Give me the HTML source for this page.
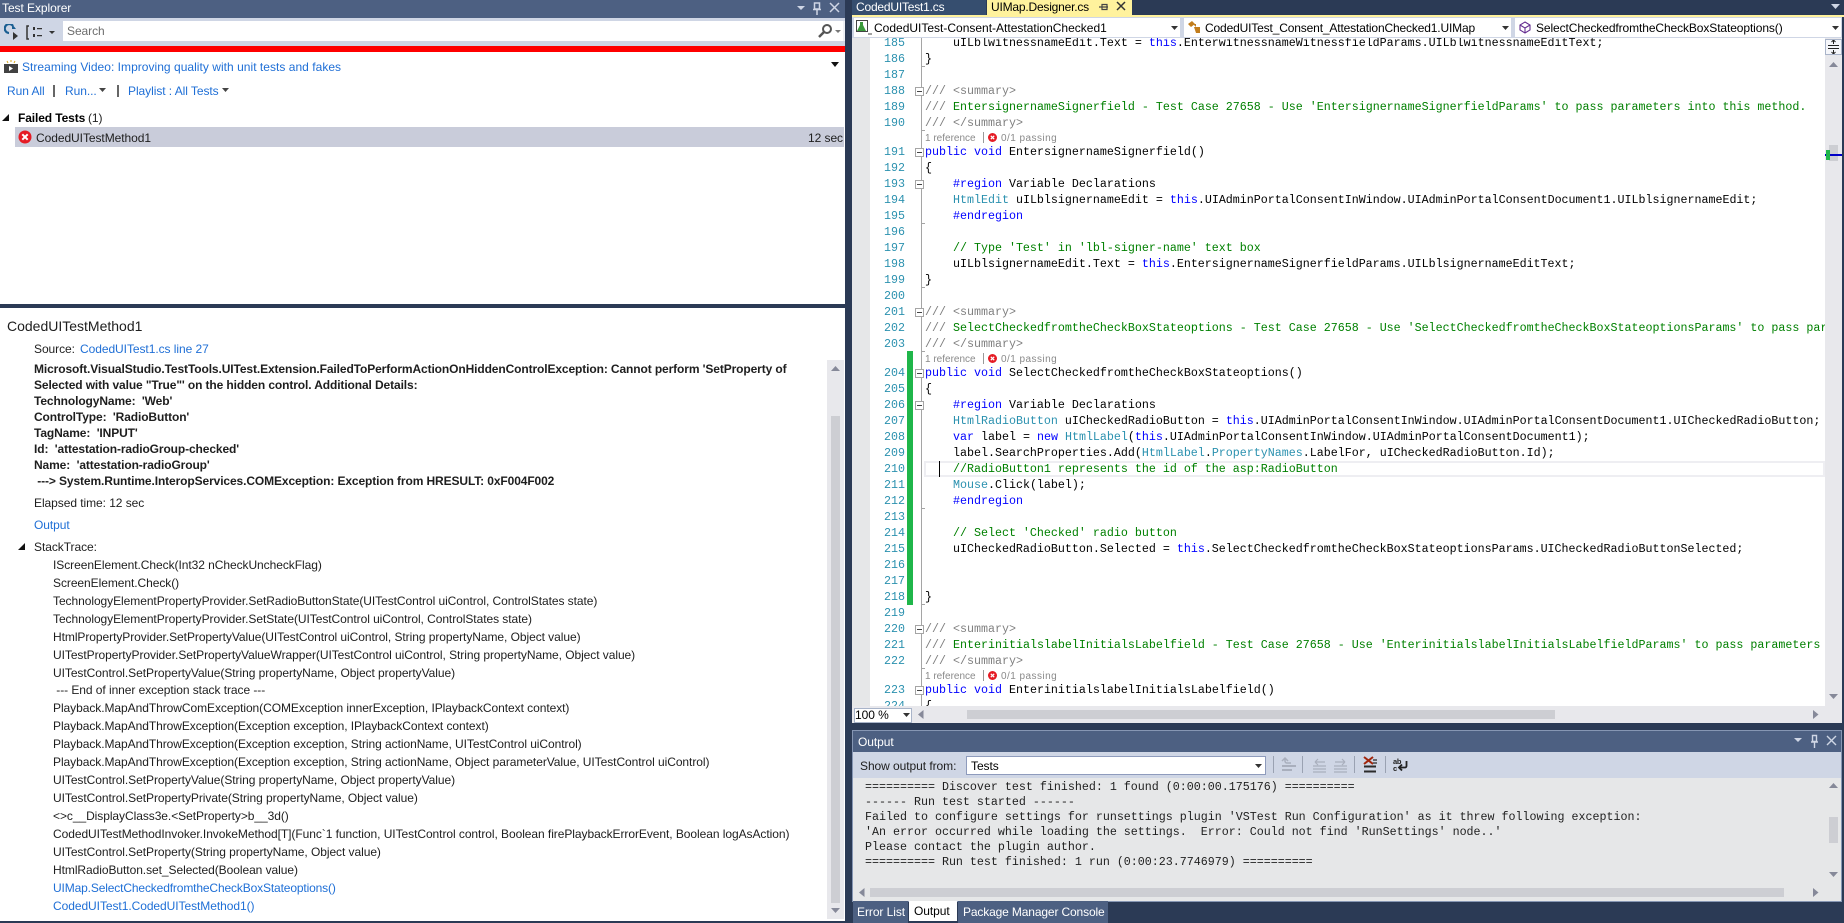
<!DOCTYPE html>
<html><head><meta charset="utf-8"><title>Test Explorer</title>
<style>
html,body{margin:0;padding:0;width:1844px;height:923px;overflow:hidden;background:#2b3a55}
*{box-sizing:border-box}
body{position:relative;font:12px "Liberation Sans",sans-serif;color:#1e1e1e}
.a{position:absolute}
.t{position:absolute;white-space:pre;line-height:16px;height:16px;letter-spacing:-.06px}
.lk{color:#1f6fd6}
.b{font-weight:bold;letter-spacing:-.11px}
#left{left:0;top:0;width:845px;height:921px;background:#fff;overflow:hidden}
#code{position:absolute;left:852px;top:38px;width:973px;height:668px;background:#fff;overflow:hidden}
#gut{position:absolute;left:0;top:0;width:18px;height:668px;background:#e6e7e8}
#lines{position:absolute;left:0;top:-3px;width:973px}
.l{position:relative;height:16px;line-height:16px;font:11.67px/16px "Liberation Mono",monospace;white-space:pre;color:#000;padding-left:73px}
.l i{font-style:normal;position:absolute;left:18px;width:35px;text-align:right;color:#2b91af;top:0}
.z{height:13px;font:10px/15px "Liberation Sans",sans-serif;color:#8a8a8a;padding-left:73px;position:relative;white-space:pre}
.z svg{position:absolute;left:136px;top:2px}
.z u{position:absolute;left:131px;top:1px;width:1px;height:11px;background:#999}
.z s{position:absolute;left:149px;top:0;text-decoration:none;letter-spacing:.45px}
.k{color:#0000ff}.c{color:#008000}.g{color:#808080}.y{color:#2b91af}.r{color:#a31515}
.box{position:absolute;left:63px;top:4px;width:9px;height:9px;background:#fff;border:1px solid #a5a5a5}
.box:after{content:"";position:absolute;left:1px;top:3px;width:5px;height:1px;background:#444}
.tk{position:absolute;left:69px;bottom:0;width:4px;height:1px;background:#a5a5a5}
#o{position:absolute;left:865px;top:780px;font:11.67px/15px "Liberation Mono",monospace;white-space:pre;color:#1e1e1e}
.cbt{position:absolute;white-space:pre;font-size:12px;line-height:16px;letter-spacing:-.1px;color:#000}
</style></head><body>

<!-- LEFT PANE -->
<div id="left" class="a">
<div class="a" style="left:0;top:0;width:845px;height:18px;background:#4d6082"></div>
<div class="t" style="left:2px;top:0;color:#fff">Test Explorer</div>
<svg class="a" style="left:796px;top:0" width="46" height="18"><path d="M1 6h8l-4 4z" fill="#cfd6e5"/><path d="M18.500 3h5v6h-5zM21 9v6M17 9.500h8" fill="none" stroke="#cfd6e5" stroke-width="1.500"/><path d="M34 3l9 9M43 3l-9 9" stroke="#cfd6e5" stroke-width="1.500"/></svg>
<div class="a" style="left:0;top:18px;width:845px;height:28px;background:#cfd6e5"></div>
<svg class="a" style="left:4px;top:24px" width="54" height="16"><path d="M9 2a4.500 4.500 0 1 0-4 7" fill="none" stroke="#1b5f92" stroke-width="2.200"/><path d="M8 0v5h4z" fill="#1b5f92"/><path d="M9 8v8l5-4z" fill="#333"/><path d="M25 2h-2v13h2" fill="none" stroke="#333" stroke-width="1.500"/><path d="M29 3h2v3h-2zM29 10h2v3h-2zM33 4h5v1.300h-5zM33 11h5v1.300h-5z" fill="#333"/><path d="M45 7h6l-3 3z" fill="#333"/></svg>
<div class="a" style="left:63px;top:21px;width:782px;height:20px;background:#fff;border-right:2px solid #eef0f5"></div>
<div class="t" style="left:67px;top:23px;color:#6d6d6d">Search</div>
<svg class="a" style="left:816px;top:23px" width="28" height="16"><circle cx="11" cy="6" r="4" fill="none" stroke="#555" stroke-width="2"/><path d="M8 9l-5 5" stroke="#555" stroke-width="2.500"/><path d="M19 7h6l-3 3z" fill="#777"/></svg>
<div class="a" style="left:0;top:46px;width:845px;height:6px;background:#ff0000"></div>

<svg class="a" style="left:4px;top:59px" width="16" height="15"><path d="M3 2l1 2M7 1v2M11 2l-1 2" stroke="#d8a820" stroke-width="1"/><rect x="0" y="5" width="14" height="9" fill="#424242"/><path d="M5 7v5l4-2.500z" fill="#fff"/></svg>
<div class="t lk" style="left:22px;top:59px;letter-spacing:.03px">Streaming Video: Improving quality with unit tests and fakes</div>
<svg class="a" style="left:831px;top:62px" width="10" height="6"><path d="M0 0h8l-4 5z" fill="#111"/></svg>
<div class="t lk" style="left:7px;top:83px">Run All</div>
<div class="a" style="left:53px;top:85px;width:2px;height:12px;background:#666"></div>
<div class="t lk" style="left:65px;top:83px">Run...</div>
<svg class="a" style="left:99px;top:88px" width="8" height="5"><path d="M0 0h7l-3.500 4z" fill="#444"/></svg>
<div class="a" style="left:117px;top:85px;width:2px;height:12px;background:#666"></div>
<div class="t lk" style="left:128px;top:83px">Playlist : All Tests</div>
<svg class="a" style="left:222px;top:88px" width="8" height="5"><path d="M0 0h7l-3.500 4z" fill="#444"/></svg>
<svg class="a" style="left:2px;top:113px" width="9" height="9"><path d="M7 1v7H0z" fill="#111"/></svg>
<div class="t b" style="left:18px;top:110px;color:#000">Failed Tests</div>
<div class="t" style="left:88px;top:110px">(1)</div>
<div class="a" style="left:15px;top:127px;width:829px;height:20px;background:#c9ccda"></div>
<svg class="a" style="left:18px;top:130px" width="14" height="14"><circle cx="7" cy="7" r="6.500" fill="#e51b24"/><path d="M4.300 4.300l5.400 5.400M9.700 4.300l-5.400 5.400" stroke="#fff" stroke-width="2"/></svg>
<div class="t" style="left:36px;top:130px">CodedUITestMethod1</div>
<div class="t" style="left:808px;top:130px">12 sec</div>

<div class="a" style="left:0;top:304px;width:845px;height:4px;background:#2b3a55"></div>
<div class="t" style="left:7px;top:318px;font-size:14px;letter-spacing:0">CodedUITestMethod1</div>
<div class="t" style="left:34px;top:341px">Source:</div>
<div class="t lk" style="left:80px;top:341px">CodedUITest1.cs line 27</div>
<div class="t b" style="left:34px;top:361px">Microsoft.VisualStudio.TestTools.UITest.Extension.FailedToPerformActionOnHiddenControlException: Cannot perform 'SetProperty of</div>
<div class="t b" style="left:34px;top:377px">Selected with value "True"' on the hidden control. Additional Details:</div>
<div class="t b" style="left:34px;top:393px">TechnologyName:  'Web'</div>
<div class="t b" style="left:34px;top:409px">ControlType:  'RadioButton'</div>
<div class="t b" style="left:34px;top:425px">TagName:  'INPUT'</div>
<div class="t b" style="left:34px;top:441px">Id:  'attestation-radioGroup-checked'</div>
<div class="t b" style="left:34px;top:457px">Name:  'attestation-radioGroup'</div>
<div class="t b" style="left:34px;top:473px"> ---&gt; System.Runtime.InteropServices.COMException: Exception from HRESULT: 0xF004F002</div>
<div class="t" style="left:34px;top:495px">Elapsed time: 12 sec</div>
<div class="t lk" style="left:34px;top:517px">Output</div>
<svg class="a" style="left:18px;top:542px" width="9" height="9"><path d="M7 1v7H0z" fill="#111"/></svg>
<div class="t" style="left:34px;top:539px">StackTrace:</div>
<div class="t" style="left:53px;top:557px">IScreenElement.Check(Int32 nCheckUncheckFlag)</div>
<div class="t" style="left:53px;top:575px">ScreenElement.Check()</div>
<div class="t" style="left:53px;top:593px">TechnologyElementPropertyProvider.SetRadioButtonState(UITestControl uiControl, ControlStates state)</div>
<div class="t" style="left:53px;top:611px">TechnologyElementPropertyProvider.SetState(UITestControl uiControl, ControlStates state)</div>
<div class="t" style="left:53px;top:629px">HtmlPropertyProvider.SetPropertyValue(UITestControl uiControl, String propertyName, Object value)</div>
<div class="t" style="left:53px;top:647px">UITestPropertyProvider.SetPropertyValueWrapper(UITestControl uiControl, String propertyName, Object value)</div>
<div class="t" style="left:53px;top:665px">UITestControl.SetPropertyValue(String propertyName, Object propertyValue)</div>
<div class="t" style="left:53px;top:682px"> --- End of inner exception stack trace ---</div>
<div class="t" style="left:53px;top:700px">Playback.MapAndThrowComException(COMException innerException, IPlaybackContext context)</div>
<div class="t" style="left:53px;top:718px">Playback.MapAndThrowException(Exception exception, IPlaybackContext context)</div>
<div class="t" style="left:53px;top:736px">Playback.MapAndThrowException(Exception exception, String actionName, UITestControl uiControl)</div>
<div class="t" style="left:53px;top:754px">Playback.MapAndThrowException(Exception exception, String actionName, Object parameterValue, UITestControl uiControl)</div>
<div class="t" style="left:53px;top:772px">UITestControl.SetPropertyValue(String propertyName, Object propertyValue)</div>
<div class="t" style="left:53px;top:790px">UITestControl.SetPropertyPrivate(String propertyName, Object value)</div>
<div class="t" style="left:53px;top:808px">&lt;&gt;c__DisplayClass3e.&lt;SetProperty&gt;b__3d()</div>
<div class="t" style="left:53px;top:826px">CodedUITestMethodInvoker.InvokeMethod[T](Func`1 function, UITestControl control, Boolean firePlaybackErrorEvent, Boolean logAsAction)</div>
<div class="t" style="left:53px;top:844px">UITestControl.SetProperty(String propertyName, Object value)</div>
<div class="t" style="left:53px;top:862px">HtmlRadioButton.set_Selected(Boolean value)</div>
<div class="t lk" style="left:53px;top:880px;letter-spacing:-.14px">UIMap.SelectCheckedfromtheCheckBoxStateoptions()</div>
<div class="t lk" style="left:53px;top:898px">CodedUITest1.CodedUITestMethod1()</div>

<div class="a" style="left:827px;top:360px;width:17px;height:559px;background:#e8e8ec"></div>
<div class="a" style="left:831px;top:416px;width:9px;height:487px;background:#cdced3"></div>
<svg class="a" style="left:831px;top:366px" width="10" height="6"><path d="M0 5h9L4.500 0z" fill="#868999"/></svg>
<svg class="a" style="left:831px;top:908px" width="10" height="6"><path d="M0 0h9L4.500 5z" fill="#868999"/></svg>
</div>

<!-- TAB STRIP -->
<div class="a" style="left:852px;top:0;width:134px;height:15px;background:#364e6f"></div>
<div class="t" style="left:856px;top:-1px;color:#fff;letter-spacing:-.2px">CodedUITest1.cs</div>
<div class="a" style="left:987px;top:0;width:145px;height:15px;background:#fff29d"></div>
<div class="t" style="left:991px;top:-1px;color:#000;letter-spacing:-.2px">UIMap.Designer.cs</div>
<svg class="a" style="left:1098px;top:1px" width="30" height="12"><path d="M3 6h7M4 3.500v5h5v-5zM1 6h2" fill="none" stroke="#444" stroke-width="1.200"/><path d="M19 1l8 8M27 1l-8 8" stroke="#333" stroke-width="1.500"/></svg>
<svg class="a" style="left:1831px;top:4px" width="10" height="6"><path d="M0 0h9L4.500 5z" fill="#cfd6e5"/></svg>
<div class="a" style="left:852px;top:15px;width:992px;height:2px;background:#fff29d"></div>
<div class="a" style="left:852px;top:17px;width:990px;height:21px;background:#cfd6e5"></div>
<div class="a" style="left:854px;top:18px;width:326px;height:19px;background:#fff"></div>
<div class="a" style="left:1184px;top:18px;width:327px;height:19px;background:#fff"></div>
<div class="a" style="left:1515px;top:18px;width:326px;height:19px;background:#fff"></div>
<svg class="a" style="left:856px;top:20px" width="18" height="16"><rect x="0.500" y="0.500" width="11" height="11" fill="none" stroke="#444"/><path d="M4 2h3v3l3 6H1l3-6z" fill="#3a9a3a"/><path d="M12 14h4" stroke="#444"/></svg>
<div class="cbt" style="left:874px;top:20px;letter-spacing:0">CodedUITest-Consent-AttestationChecked1</div>
<svg class="a" style="left:1171px;top:26px" width="8" height="5"><path d="M0 0h7l-3.500 4z" fill="#333"/></svg>
<svg class="a" style="left:1188px;top:20px" width="15" height="15"><path d="M0 4l4-3 3 3-4 3zM6 7h6v6H8zM5 4h3v3" fill="#c27d1c"/></svg>
<div class="cbt" style="left:1205px;top:20px;letter-spacing:-.15px">CodedUITest_Consent_AttestationChecked1.UIMap</div>
<svg class="a" style="left:1502px;top:26px" width="8" height="5"><path d="M0 0h7l-3.500 4z" fill="#333"/></svg>
<svg class="a" style="left:1518px;top:20px" width="14" height="15"><path d="M7 2l5 3v5l-5 3-5-3V5zM2 5l5 3 5-3M7 8v5" fill="none" stroke="#652d90" stroke-width="1.100"/></svg>
<div class="cbt" style="left:1536px;top:20px">SelectCheckedfromtheCheckBoxStateoptions()</div>
<svg class="a" style="left:1832px;top:26px" width="8" height="5"><path d="M0 0h7l-3.500 4z" fill="#333"/></svg>

<!-- EDITOR -->
<div id="code">
<div id="gut"></div>
<div class="a" style="left:69px;top:0;width:1px;height:668px;background:#a5a5a5"></div>
<div class="a" style="left:55px;top:313px;width:6px;height:254px;background:#1fb64a"></div>
<div id="lines">
<div class="l"><i>185</i>    uILblwitnessnameEdit.Text = <span class="k">this</span>.EnterwitnessnameWitnessfieldParams.UILblwitnessnameEditText;</div>
<div class="l"><i>186</i><b class="tk"></b>}</div>
<div class="l"><i>187</i></div>
<div class="l"><i>188</i><b class="box"></b><span class="g">///</span> <span class="g">&lt;summary&gt;</span></div>
<div class="l"><i>189</i><span class="g">///</span> <span class="c">EntersignernameSignerfield - Test Case 27658 - Use 'EntersignernameSignerfieldParams' to pass parameters into this method.</span></div>
<div class="l"><i>190</i><b class="tk"></b><span class="g">///</span> <span class="g">&lt;/summary&gt;</span></div>
<div class="z">1 reference<u></u><svg width="9" height="9"><circle cx="4.500" cy="4.500" r="4.500" fill="#e51b24"/><path d="M2.800 2.800l3.400 3.400M6.200 2.800l-3.400 3.400" stroke="#fff" stroke-width="1.300"/></svg><s>0/1 passing</s></div>
<div class="l"><i>191</i><b class="box"></b><span class="k">public</span> <span class="k">void</span> EntersignernameSignerfield()</div>
<div class="l"><i>192</i>{</div>
<div class="l"><i>193</i><b class="box"></b>    <span class="k">#region</span> Variable Declarations</div>
<div class="l"><i>194</i>    <span class="y">HtmlEdit</span> uILblsignernameEdit = <span class="k">this</span>.UIAdminPortalConsentInWindow.UIAdminPortalConsentDocument1.UILblsignernameEdit;</div>
<div class="l"><i>195</i><b class="tk"></b>    <span class="k">#endregion</span></div>
<div class="l"><i>196</i></div>
<div class="l"><i>197</i>    <span class="c">// Type 'Test' in 'lbl-signer-name' text box</span></div>
<div class="l"><i>198</i>    uILblsignernameEdit.Text = <span class="k">this</span>.EntersignernameSignerfieldParams.UILblsignernameEditText;</div>
<div class="l"><i>199</i><b class="tk"></b>}</div>
<div class="l"><i>200</i></div>
<div class="l"><i>201</i><b class="box"></b><span class="g">///</span> <span class="g">&lt;summary&gt;</span></div>
<div class="l"><i>202</i><span class="g">///</span> <span class="c">SelectCheckedfromtheCheckBoxStateoptions - Test Case 27658 - Use 'SelectCheckedfromtheCheckBoxStateoptionsParams' to pass par</span></div>
<div class="l"><i>203</i><b class="tk"></b><span class="g">///</span> <span class="g">&lt;/summary&gt;</span></div>
<div class="z">1 reference<u></u><svg width="9" height="9"><circle cx="4.500" cy="4.500" r="4.500" fill="#e51b24"/><path d="M2.800 2.800l3.400 3.400M6.200 2.800l-3.400 3.400" stroke="#fff" stroke-width="1.300"/></svg><s>0/1 passing</s></div>
<div class="l"><i>204</i><b class="box"></b><span class="k">public</span> <span class="k">void</span> SelectCheckedfromtheCheckBoxStateoptions()</div>
<div class="l"><i>205</i>{</div>
<div class="l"><i>206</i><b class="box"></b>    <span class="k">#region</span> Variable Declarations</div>
<div class="l"><i>207</i>    <span class="y">HtmlRadioButton</span> uICheckedRadioButton = <span class="k">this</span>.UIAdminPortalConsentInWindow.UIAdminPortalConsentDocument1.UICheckedRadioButton;</div>
<div class="l"><i>208</i>    <span class="k">var</span> label = <span class="k">new</span> <span class="y">HtmlLabel</span>(<span class="k">this</span>.UIAdminPortalConsentInWindow.UIAdminPortalConsentDocument1);</div>
<div class="l"><i>209</i>    label.SearchProperties.Add(<span class="y">HtmlLabel</span>.<span class="y">PropertyNames</span>.LabelFor, uICheckedRadioButton.Id);</div>
<div class="l"><i>210</i><span class="a" style="left:72px;top:0;width:901px;height:16px;border:2px solid #eeeef2"></span><span class="a" style="left:87px;top:0;width:1px;height:16px;background:#000"></span>    <span class="c">//RadioButton1 represents the id of the asp:RadioButton</span></div>
<div class="l"><i>211</i>    <span class="y">Mouse</span>.Click(label);</div>
<div class="l"><i>212</i><b class="tk"></b>    <span class="k">#endregion</span></div>
<div class="l"><i>213</i></div>
<div class="l"><i>214</i>    <span class="c">// Select 'Checked' radio button</span></div>
<div class="l"><i>215</i>    uICheckedRadioButton.Selected = <span class="k">this</span>.SelectCheckedfromtheCheckBoxStateoptionsParams.UICheckedRadioButtonSelected;</div>
<div class="l"><i>216</i></div>
<div class="l"><i>217</i></div>
<div class="l"><i>218</i><b class="tk"></b>}</div>
<div class="l"><i>219</i></div>
<div class="l"><i>220</i><b class="box"></b><span class="g">///</span> <span class="g">&lt;summary&gt;</span></div>
<div class="l"><i>221</i><span class="g">///</span> <span class="c">EnterinitialslabelInitialsLabelfield - Test Case 27658 - Use 'EnterinitialslabelInitialsLabelfieldParams' to pass parameters</span></div>
<div class="l"><i>222</i><b class="tk"></b><span class="g">///</span> <span class="g">&lt;/summary&gt;</span></div>
<div class="z">1 reference<u></u><svg width="9" height="9"><circle cx="4.500" cy="4.500" r="4.500" fill="#e51b24"/><path d="M2.800 2.800l3.400 3.400M6.200 2.800l-3.400 3.400" stroke="#fff" stroke-width="1.300"/></svg><s>0/1 passing</s></div>
<div class="l"><i>223</i><b class="box"></b><span class="k">public</span> <span class="k">void</span> EnterinitialslabelInitialsLabelfield()</div>
<div class="l"><i>224</i>{</div>
</div>
</div>

<!-- EDITOR SCROLLBARS -->
<div class="a" style="left:1825px;top:38px;width:17px;height:668px;background:#e8e8ec"></div>
<div class="a" style="left:1825px;top:39px;width:17px;height:16px;background:#f5f6fa;border:1px solid #a9b4c9"></div>
<svg class="a" style="left:1827px;top:40px" width="13" height="14"><path d="M1 5.500h11M1 8.500h11" stroke="#222"/><path d="M6.500 0v4M6.500 10v4M4.500 2l2-2 2 2M4.500 12l2 2 2-2" fill="none" stroke="#222"/></svg>
<svg class="a" style="left:1829px;top:62px" width="10" height="6"><path d="M0 5h9L4.500 0z" fill="#868999"/></svg>
<div class="a" style="left:1829px;top:145px;width:9px;height:16px;background:#cdced3"></div>
<div class="a" style="left:1825px;top:154px;width:17px;height:2px;background:#0000c8"></div>
<div class="a" style="left:1826px;top:150px;width:4px;height:10px;background:#1fb64a"></div>
<svg class="a" style="left:1829px;top:694px" width="10" height="6"><path d="M0 0h9L4.500 5z" fill="#868999"/></svg>
<div class="a" style="left:852px;top:706px;width:990px;height:17px;background:#e8e8ec"></div>
<div class="a" style="left:854px;top:708px;width:58px;height:15px;background:#fff;border:1px solid #a9b4c9"></div>
<div class="t" style="left:855px;top:707px;color:#000">100 %</div>
<svg class="a" style="left:903px;top:713px" width="8" height="5"><path d="M0 0h7l-3.500 4z" fill="#333"/></svg>
<svg class="a" style="left:918px;top:710px" width="7" height="10"><path d="M5.500 0v9L0 4.500z" fill="#868999"/></svg>
<div class="a" style="left:967px;top:710px;width:588px;height:9px;background:#cdced3"></div>
<svg class="a" style="left:1813px;top:710px" width="7" height="10"><path d="M0 0v9l5.500-4.500z" fill="#868999"/></svg>

<!-- OUTPUT PANE -->
<div class="a" style="left:852px;top:730px;width:990px;height:172px;background:#e6e7e8;border:1px solid #8696b3"></div>
<div class="a" style="left:853px;top:731px;width:988px;height:21px;background:#4d6082"></div>
<div class="t" style="left:858px;top:734px;color:#fff">Output</div>
<svg class="a" style="left:1793px;top:734px" width="46" height="15"><path d="M1 4h8l-4 4z" fill="#cfd6e5"/><path d="M19.500 1.500h4v6h-4zM21.500 8v6M18 8h7" fill="none" stroke="#cfd6e5" stroke-width="1.400"/><path d="M34 2l9 9M43 2l-9 9" stroke="#cfd6e5" stroke-width="1.400"/></svg>
<div class="a" style="left:853px;top:752px;width:988px;height:26px;background:#cfd6e5"></div>
<div class="t" style="left:860px;top:758px">Show output from:</div>
<div class="a" style="left:966px;top:756px;width:300px;height:19px;background:#fff;border:1px solid #8e9bbc"></div>
<div class="t" style="left:971px;top:758px;color:#000">Tests</div>
<svg class="a" style="left:1255px;top:764px" width="8" height="5"><path d="M0 0h7l-3.500 4z" fill="#333"/></svg>
<svg class="a" style="left:1271px;top:755px" width="145" height="22"><g fill="none"><path d="M2.500 1v17M31.500 1v17M83.500 1v17M114.500 1v17" stroke="#9aa2b2"/><path d="M11 11h14M11 15h10" stroke="#a9afbd" stroke-width="2"/><path d="M20 8h-4a2 2 0 0 1-2-2V3M11 6l3-3 3 3" stroke="#a9afbd" stroke-width="1.500"/><path d="M42 11h13M42 14h13M42 17h13M44 7h10M44 7l3-3M44 7l3 3" stroke="#a9afbd" stroke-width="1.200"/><path d="M63 11h13M63 14h13M63 17h13M64 7h10M74 7l-3-3M74 7l-3 3" stroke="#a9afbd" stroke-width="1.200"/><path d="M93 11.500h12M93 16.500h12" stroke="#2b2b2b" stroke-width="2"/><path d="M93 2l9 7M102 2l-9 7" stroke="#a1260d" stroke-width="2"/><path d="M102 5h4M102 8h4" stroke="#2b2b2b" stroke-width="1.200"/><path d="M135.500 6v5a1.500 1.500 0 0 1-1.500 1.500h-6M131 9.500l-3 3 3 3" stroke="#222" stroke-width="1.800"/></g><text x="122" y="9" font-family="Liberation Sans" font-size="7.500" font-weight="bold" fill="#222" letter-spacing="-.3">ab</text><text x="122" y="16" font-family="Liberation Sans" font-size="7.500" font-weight="bold" fill="#222">c</text></svg>
<div id="o">========== Discover test finished: 1 found (0:00:00.175176) ==========
------ Run test started ------
Failed to configure settings for runsettings plugin 'VSTest Run Configuration' as it threw following exception:
'An error occurred while loading the settings.  Error: Could not find 'RunSettings' node..'
Please contact the plugin author.
========== Run test finished: 1 run (0:00:23.7746979) ==========</div>
<div class="a" style="left:870px;top:888px;width:914px;height:9px;background:#cdced3"></div>
<svg class="a" style="left:859px;top:888px" width="7" height="10"><path d="M5.500 0v9L0 4.500z" fill="#868999"/></svg>
<svg class="a" style="left:1813px;top:888px" width="7" height="10"><path d="M0 0v9l5.500-4.500z" fill="#868999"/></svg>
<svg class="a" style="left:1829px;top:783px" width="10" height="6"><path d="M0 5h9L4.500 0z" fill="#868999"/></svg>
<div class="a" style="left:1829px;top:817px;width:9px;height:26px;background:#cdced3"></div>
<svg class="a" style="left:1829px;top:872px" width="10" height="6"><path d="M0 0h9L4.500 5z" fill="#868999"/></svg>
<div class="a" style="left:853px;top:901px;width:55px;height:22px;background:#4d6082"></div>
<div class="t" style="left:857px;top:904px;color:#fff">Error List</div>
<div class="a" style="left:909px;top:901px;width:48px;height:20px;background:#fff"></div>
<div class="t" style="left:914px;top:903px;color:#000">Output</div>
<div class="a" style="left:958px;top:901px;width:150px;height:22px;background:#4d6082"></div>
<div class="t" style="left:963px;top:904px;color:#fff;letter-spacing:-.14px">Package Manager Console</div>
</body></html>
